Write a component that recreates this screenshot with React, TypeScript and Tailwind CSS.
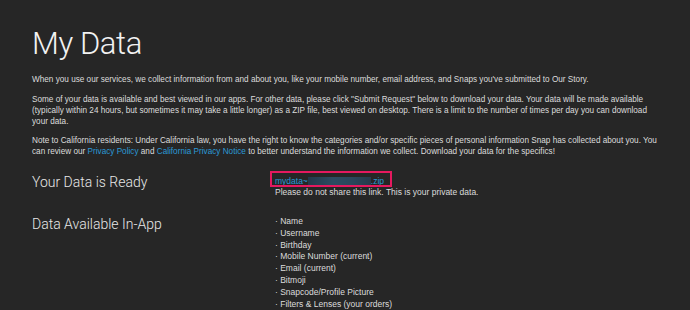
import React from 'react';

const inApp = [
  'Name',
  'Username',
  'Birthday',
  'Mobile Number (current)',
  'Email (current)',
  'Bitmoji',
  'Snapcode/Profile Picture',
  'Filters & Lenses (your orders)',
];

export default function App() {
  return (
    <div className="h-[310px] overflow-hidden bg-[#262626] text-[#e4e4e4] font-['Liberation_Sans',Arial,sans-serif]">
      <div className="pl-8 pr-[28px] pt-[26px]">
        <h1 className="text-[31px] leading-[36px] font-light tracking-[-0.4px] text-[#f2f2f2] font-['Roboto',sans-serif]">
          My Data
        </h1>

        <div className="mt-[12px] text-[8.2px] leading-[11px] text-[#dcdcdc] max-w-[630px]">
          <p>
            When you use our services, we collect information from and about you, like your mobile number, email
            address, and Snaps you've submitted to Our Story.
          </p>
          <p className="mt-[9px]">
            Some of your data is available and best viewed in our apps. For other data, please click "Submit Request"
            below to download your data. Your data will be made available (typically within 24 hours, but sometimes it
            may take a little longer) as a ZIP file, best viewed on desktop. There is a limit to the number of times per
            day you can download your data.
          </p>
          <p className="mt-[8px]">
            Note to California residents: Under California law, you have the right to know the categories and/or
            specific pieces of personal information Snap has collected about you. You can review our{' '}
            <a className="text-[#2b9ad6]">Privacy Policy</a> and{' '}
            <a className="text-[#2b9ad6]">California Privacy Notice</a> to better understand the information we
            collect. Download your data for the specifics!
          </p>
        </div>

        <div className="mt-[19px] grid grid-cols-[243px_1fr] gap-y-[17px]">
          <h2 className="text-[14px] leading-[12px] font-light text-[#e8e8e8] font-['Roboto',sans-serif]">
            Your Data is Ready
          </h2>
          <div className="text-[8.5px] leading-[10px]">
            <div className="relative inline-flex items-center">
              <span className="text-[#2b9ad6]">mydata~</span>
              <span className="h-[9px] w-[63px] bg-[linear-gradient(90deg,#23394a,#2c4c61_40%,#2a475b_70%,#263b4b)] blur-[0.6px]" />
              <span className="text-[#2b9ad6]">.zip</span>
              <span className="absolute -left-[5px] -right-[8px] -top-[5px] -bottom-[1px] border-2 border-[#e5195f]" />
            </div>
            <p className="mt-[1px] text-[#dcdcdc]">Please do not share this link. This is your private data.</p>
          </div>

          <h2 className="text-[14px] leading-[20px] font-light text-[#e8e8e8] font-['Roboto',sans-serif]">
            Data Available In-App
          </h2>
          <ul className="mt-[2px] text-[8.5px] leading-[11.8px] text-[#dcdcdc]">
            {inApp.map((item) => (
              <li key={item}>· {item}</li>
            ))}
          </ul>
        </div>
      </div>
    </div>
  );
}
